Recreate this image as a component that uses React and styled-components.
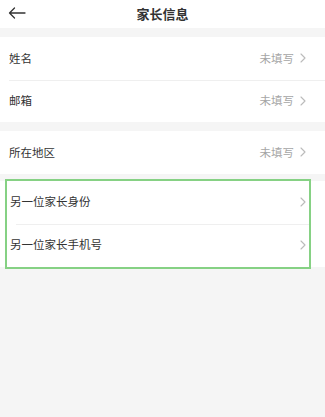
import React from 'react'
import styled, { createGlobalStyle } from 'styled-components'

const GlobalStyle = createGlobalStyle`
  html, body {
    margin: 0;
    padding: 0;
    background: #f5f5f5;
  }
  body {
    font-family: "Noto Sans CJK SC", "Noto Sans", sans-serif;
  }
`

const BackIcon = () => (
  <svg width="18" height="12" viewBox="0 0 18 12" fill="none">
    <path d="M17 6H1.5M6.5 1L1.5 6L6.5 11" stroke="#333" strokeWidth="1.3" strokeLinecap="round" strokeLinejoin="round" />
  </svg>
)

const Chevron = () => (
  <svg width="6" height="10" viewBox="0 0 6 10" fill="none">
    <path d="M1 1L5 5L1 9" stroke="#bbb" strokeWidth="1.1" strokeLinecap="round" strokeLinejoin="round" />
  </svg>
)

const Row = ({ label, value, tall }) => (
  <RowWrap tall={tall}>
    <Label>{label}</Label>
    <Right>
      {value && <Value>{value}</Value>}
      <Chevron />
    </Right>
  </RowWrap>
)

export default function App() {
  return (
    <>
      <GlobalStyle />
      <Page>
        <Header>
          <BackBtn><BackIcon /></BackBtn>
          <Title>家长信息</Title>
        </Header>

        <Card gap={9}>
          <Row label="姓名" value="未填写" />
          <Row label="邮箱" value="未填写" />
        </Card>

        <Card gap={9}>
          <Row label="所在地区" value="未填写" />
        </Card>

        <Card gap={7}>
          <Highlight>
            <Row label="另一位家长身份" tall />
            <Row label="另一位家长手机号" tall />
          </Highlight>
        </Card>
      </Page>
    </>
  )
}

const Page = styled.div`
  width: 100%;
  min-height: 417px;
  background: #f5f5f5;
`

const Header = styled.div`
  position: relative;
  height: 28px;
  background: #fff;
  display: flex;
  align-items: center;
  justify-content: center;
`

const BackBtn = styled.div`
  position: absolute;
  left: 8px;
  top: 7px;
  display: flex;
`

const Title = styled.div`
  font-size: 13px;
  font-weight: 700;
  color: #333;
  line-height: 1;
  margin-top: -2px;
`

const Card = styled.div`
  margin-top: ${p => p.gap}px;
  background: #fff;
`

const Highlight = styled.div`
  margin: 0 16px 0 7px;
  outline: 2px solid #86d184;
  & > div {
    padding-left: 3px;
    padding-right: 3px;
  }
  & > div + div::before {
    left: 3px;
  }
`

const RowWrap = styled.div.withConfig({ shouldForwardProp: p => p !== 'tall' })`
  position: relative;
  height: ${p => (p.tall ? 43 : 42.5)}px;
  display: flex;
  align-items: center;
  justify-content: space-between;
  padding: 0 19px 0 9px;

  & + &::before {
    content: '';
    position: absolute;
    top: 0;
    left: 9px;
    right: 0;
    height: 1px;
    background: #efefef;
  }
`

const Label = styled.span`
  font-size: 11.5px;
  line-height: 1;
  color: #333;
`

const Right = styled.div`
  display: flex;
  align-items: center;
  gap: 6px;
`

const Value = styled.span`
  font-size: 11.5px;
  line-height: 1;
  color: #a6a6a6;
`
